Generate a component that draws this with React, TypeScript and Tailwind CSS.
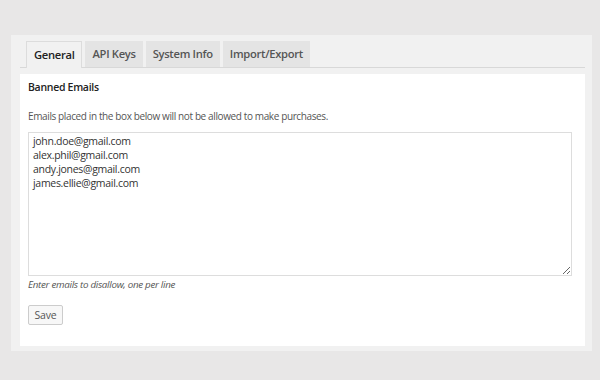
import React from "react";

export default function App() {
  const tabs = ["General", "API Keys", "System Info", "Import/Export"];
  const emails = "john.doe@gmail.com\nalex.phil@gmail.com\nandy.jones@gmail.com\njames.ellie@gmail.com";
  return (
    <div
      className="w-[600px] h-[380px] bg-[#e8e7e7] pt-[35px] pl-[11px]"
      style={{ fontFamily: '"Open Sans", sans-serif' }}
    >
      <div className="w-[581px] h-[316px] bg-[#f1f1f1] pt-[7px] pl-[9px] pr-[7px] flex flex-col">
        <div className="flex gap-[3px] pl-[6px] border-b border-[#d8d8d8] h-[26px] items-end">
          {tabs.map((t, i) => (
            <div
              key={t}
              className={
                i === 0
                  ? "h-[27px] px-[7px] flex items-center text-[11.2px] tracking-[-0.3px] font-semibold text-[#222] bg-[#f1f1f1] border border-[#dcdcdc] border-b-0 -mb-px"
                  : "h-[26px] px-[7px] flex items-center text-[11.2px] tracking-[-0.3px] font-semibold text-[#555] bg-[#e4e4e4]"
              }
            >
              {t}
            </div>
          ))}
        </div>
        <div className="mt-[6px] h-[272px] bg-white pl-[8px] pr-[13px] pt-[6px] flex flex-col">
          <div className="text-[10.5px] tracking-[-0.3px] font-semibold text-[#222] leading-[14px]">Banned Emails</div>
          <div className="mt-[16px] text-[10px] tracking-[-0.38px] text-[#555] leading-[12px]">
            Emails placed in the box below will not be allowed to make purchases.
          </div>
          <textarea
            readOnly
            value={emails}
            className="mt-[10px] h-[144px] w-full border border-[#ddd] px-[4px] py-[1px] text-[10.5px] tracking-[-0.3px] leading-[14px] text-[#333] resize-y outline-none"
            style={{ fontFamily: '"Open Sans", sans-serif' }}
          />
          <div className="mt-[3px] text-[9.8px] tracking-[-0.3px] italic text-[#555] leading-[12px]">
            Enter emails to disallow, one per line
          </div>
          <div className="mt-[10px]">
            <button className="h-[20px] w-[35px] text-[10.5px] tracking-[-0.2px] text-[#555] bg-[#f7f7f7] border border-[#ccc] rounded-[2px] leading-none">
              Save
            </button>
          </div>
        </div>
      </div>
    </div>
  );
}
